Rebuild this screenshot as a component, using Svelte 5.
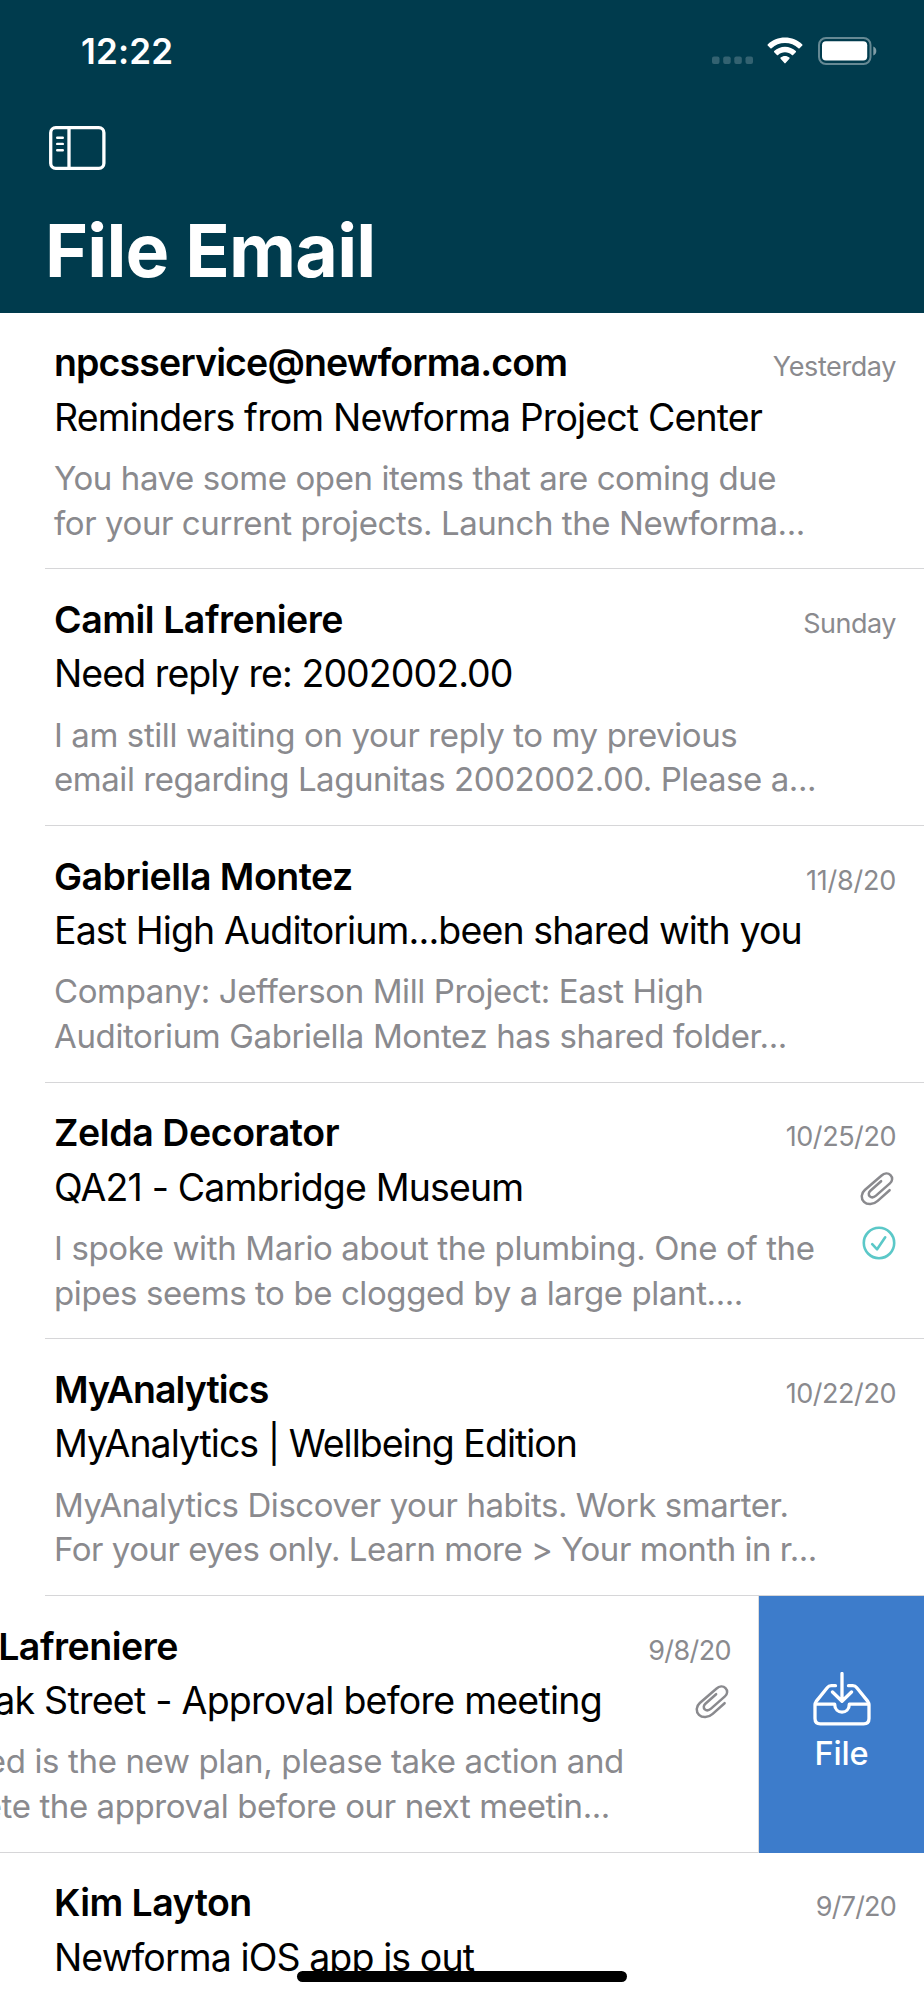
<script lang="ts">
    interface Line {
        text: string;
        tracking: number;
    }

    interface Message {
        id: number;
        sender: Line;
        date: Line;
        subject: Line;
        preview: Line[];
        attachment?: boolean;
        filed?: boolean;
        swiped?: boolean;
    }

    function line(text: string, tracking: number): Line {
        return { text, tracking };
    }

    const messages: Message[] = [
        {
            id: 1,
            sender: line("npcsservice@newforma.com", -0.86),
            date: line("Yesterday", -0.4),
            subject: line("Reminders from Newforma Project Center", -0.87),
            preview: [
                line("You have some open items that are coming due", -0.4),
                line("for your current projects. Launch the Newforma...", -0.42),
            ],
        },
        {
            id: 2,
            sender: line("Camil Lafreniere", -0.48),
            date: line("Sunday", -0.5),
            subject: line("Need reply re: 2002002.00", -0.93),
            preview: [
                line("I am still waiting on your reply to my previous", -0.4),
                line("email regarding Lagunitas 2002002.00. Please a...", -0.44),
            ],
        },
        {
            id: 3,
            sender: line("Gabriella Montez", -0.5),
            date: line("11/8/20", -0.25),
            subject: line("East High Auditorium...been shared with you", -0.88),
            preview: [
                line("Company: Jefferson Mill Project: East High", -0.39),
                line("Auditorium Gabriella Montez has shared folder...", -0.37),
            ],
        },
        {
            id: 4,
            sender: line("Zelda Decorator", -0.42),
            date: line("10/25/20", -0.45),
            subject: line("QA21 - Cambridge Museum", -0.85),
            preview: [
                line("I spoke with Mario about the plumbing. One of the", -0.37),
                line("pipes seems to be clogged by a large plant....", -0.4),
            ],
            attachment: true,
            filed: true,
        },
        {
            id: 5,
            sender: line("MyAnalytics", -0.92),
            date: line("10/22/20", -0.45),
            subject: line("MyAnalytics | Wellbeing Edition", -1),
            preview: [
                line("MyAnalytics Discover your habits. Work smarter.", -0.43),
                line("For your eyes only. Learn more > Your month in r...", -0.48),
            ],
        },
        {
            id: 6,
            sender: line("Camil Lafreniere", -0.48),
            date: line("9/8/20", -0.6),
            subject: line("248 Oak Street - Approval before meeting", -0.75),
            preview: [
                line("Attached is the new plan, please take action and", -0.36),
                line("complete the approval before our next meetin...", -0.4),
            ],
            attachment: true,
            swiped: true,
        },
        {
            id: 7,
            sender: line("Kim Layton", -0.55),
            date: line("9/7/20", -0.8),
            subject: line("Newforma iOS app is out", -0.9),
            preview: [],
        },
    ];
</script>

{#snippet paperclip()}
    <svg class="clip" viewBox="0 0 34 34" fill="none">
        <path
            d="M29.6 18.2 17.700 28.900C13.200 33 7.200 33 4 29.800 .8 26.600 .9 21.500 4.800 18L21.300 3.700c3-2.600 6.900-2.800 9.200-.5s2.200 5.700-.6 8.200L16 23.600c-2 1.800-4.600 2.200-6.200.7s-1.300-3.800.6-5.500l10.700-9.600"
        />
    </svg>
{/snippet}

<div class="screen">
    <header>
        <div class="status-bar">
            <span class="clock">12:22</span>
            <div class="indicators">
                <svg class="signal" width="41" height="28" viewBox="0 0 41 28">
                    <rect x="0" y="19.5" width="7.5" height="7.5" rx="2" />
                    <rect x="11.2" y="19.5" width="7.5" height="7.5" rx="2" />
                    <rect x="22.3" y="19.5" width="7.5" height="7.5" rx="2" />
                    <rect x="33.5" y="19.5" width="7.5" height="7.5" rx="2" />
                </svg>
                <svg class="wifi" width="36" height="28" viewBox="0 0 36 28">
                    <path
                        d="M18 .5c6.6 0 12.7 2.6 17.3 6.9q.6.6 0 1.2l-2.700 2.700q-.6.5-1.2 0C27.800 7.900 23.100 6 18 6S8.200 7.900 4.600 11.300q-.6.5-1.200 0L.7 8.600q-.6-.6 0-1.200C5.300 3.100 11.400.5 18 .5z"
                    />
                    <path
                        d="M18 9.800c4.100 0 7.900 1.600 10.800 4.200q.6.600 0 1.200l-2.700 2.700q-.6.500-1.200 0c-1.900-1.700-4.300-2.700-6.900-2.700s-5 1-6.900 2.700q-.6.500-1.200 0l-2.700-2.700q-.6-.6 0-1.200c2.900-2.600 6.700-4.200 10.800-4.200z"
                    />
                    <path
                        d="M18 19c1.700 0 3.200.6 4.400 1.600q.6.600 0 1.200l-3.800 4.300q-.6.600-1.200 0l-3.800-4.300q-.6-.6 0-1.200C14.800 19.600 16.300 19 18 19z"
                    />
                </svg>
                <svg class="battery" width="60" height="28" viewBox="0 0 60 28">
                    <rect
                        class="shell"
                        x="1"
                        y="1"
                        width="51.5"
                        height="26"
                        rx="7"
                    />
                    <rect x="4" y="4.3" width="45.2" height="19.2" rx="4" />
                    <path class="tip" d="M55.3 9.5c4 1.5 4 7.500 0 9z" />
                </svg>
            </div>
        </div>

        <button type="button" class="sidebar-toggle" aria-label="Sidebar">
            <svg width="57" height="44" viewBox="0 0 57 44" fill="none">
                <rect x="1.7" y="1.7" width="53.2" height="40.6" rx="5" />
                <path d="M20 1.7v40.6" />
                <path
                    class="rows"
                    d="M8.2 11.8h5.6M8.2 17.9h5.6M8.2 24.2h5.6"
                />
            </svg>
        </button>

        <h1>File Email</h1>
    </header>

    <main>
        {#each messages as message (message.id)}
            <div class="row" class:swiped={message.swiped}>
                <article class="message">
                    <div class="top">
                        <span
                            class="sender"
                            style:letter-spacing="{message.sender.tracking}px"
                            >{message.sender.text}</span
                        >
                        <time
                            style:letter-spacing="{message.date.tracking}px"
                            >{message.date.text}</time
                        >
                    </div>
                    <div class="middle">
                        <span
                            class="subject"
                            style:letter-spacing="{message.subject.tracking}px"
                            >{message.subject.text}</span
                        >
                        {#if message.attachment}
                            {@render paperclip()}
                        {/if}
                    </div>
                    <div class="bottom">
                        <div class="preview">
                            {#each message.preview as part}
                                <p style:letter-spacing="{part.tracking}px">
                                    {part.text}
                                </p>
                            {/each}
                        </div>
                        {#if message.filed}
                            <svg class="check" viewBox="0 0 34 34" fill="none">
                                <circle cx="17" cy="17" r="15.2" />
                                <path d="M10.2 18.2 15.1 23.3 23.2 11.3" />
                            </svg>
                        {/if}
                    </div>
                </article>

                {#if message.swiped}
                    <button type="button" class="file-action">
                        <svg
                            width="58"
                            height="54"
                            viewBox="0 0 58 54"
                            fill="none"
                        >
                            <path
                                d="M22.5 13.7h-4.300q-2.400 0-4 2.100L3.200 29.400Q2 31 2 33v13.500q0 5.300 5.300 5.300h43.400q5.300 0 5.300-5.300V33q0-2-1.200-3.600L43.800 15.800q-1.600-2.100-4-2.100h-4.300"
                            />
                            <path
                                d="M2.5 32.2h19.200c0 10.600 14.600 10.600 14.600 0h19.200"
                            />
                            <path d="M29 1.5v27.5M19.5 20l9.5 9.3L38.5 20" />
                        </svg>
                        <span>File</span>
                    </button>
                {/if}
            </div>
        {/each}
    </main>

    <div class="home-indicator"></div>
</div>

<style>
    :global(body) {
        margin: 0;
        background: #fff;
    }

    .screen {
        position: relative;
        width: 924px;
        height: 2000px;
        overflow: hidden;
        background: #fff;
        font-family: Inter, "Liberation Sans", sans-serif;
    }

    header {
        box-sizing: border-box;
        height: 312.8px;
        background: #003b4d;
        color: #fff;
    }

    .status-bar {
        display: flex;
        align-items: center;
        justify-content: space-between;
        height: 101px;
        padding: 0 46.5px 0 81px;
    }

    .clock {
        font-size: 35px;
        font-weight: 600;
        line-height: 42px;
        letter-spacing: 0.2px;
    }

    .indicators {
        display: flex;
        align-items: center;
    }

    .indicators svg {
        fill: #fff;
    }

    .signal {
        opacity: 0.2;
        margin-right: 14px;
    }

    .wifi {
        margin-right: 15px;
    }

    .battery .shell {
        fill: none;
        stroke: #fff;
        stroke-width: 2;
        opacity: 0.4;
    }

    .battery .tip {
        opacity: 0.5;
    }

    button {
        border: 0;
        padding: 0;
        color: inherit;
        font-family: inherit;
        cursor: pointer;
    }

    .sidebar-toggle {
        display: block;
        margin: 24.5px 0 0 49px;
        height: 44px;
        background: none;
    }

    .sidebar-toggle svg {
        display: block;
        stroke: #fff;
        stroke-width: 3.3;
    }

    .sidebar-toggle .rows {
        stroke-width: 2.4;
        stroke-linecap: round;
    }

    h1 {
        margin: 36.5px 0 0 45px;
        font-size: 73.5px;
        font-weight: 700;
        line-height: 90px;
        letter-spacing: -0.8px;
    }

    .row {
        display: flex;
        height: 256.67px;
        overflow: hidden;
    }

    .message {
        position: relative;
        box-sizing: border-box;
        flex: 0 0 924px;
        height: 256.67px;
        padding: 23.5px 28px 0 54px;
        background: #fff;
    }

    .message::after {
        content: "";
        position: absolute;
        left: 45px;
        right: 0;
        bottom: 0;
        height: 1px;
        background: #d6d6d8;
    }

    .swiped .message {
        margin-left: -165px;
        border-right: 1px solid #dcdcdd;
        padding-right: 27px;
    }

    .top,
    .middle,
    .bottom {
        display: flex;
        justify-content: space-between;
        white-space: nowrap;
    }

    .top {
        align-items: baseline;
        height: 54.3px;
    }

    .sender {
        font-size: 37.5px;
        font-weight: 600;
        line-height: 54px;
        color: #000;
    }

    time {
        font-size: 27px;
        line-height: 54px;
        color: #8a8a8e;
    }

    .middle {
        align-items: center;
        height: 54px;
    }

    .subject {
        font-size: 37.5px;
        line-height: 54px;
        color: #000;
    }

    .clip {
        width: 34px;
        height: 34px;
        margin: 2px 2px 0 0;
        stroke: #8a8a8e;
        stroke-width: 2.5;
        stroke-linecap: round;
        stroke-linejoin: round;
    }

    .bottom {
        margin-top: 11.5px;
    }

    .preview p {
        margin: 0;
        font-size: 33px;
        line-height: 44.6px;
        color: #8a8a8e;
    }

    .check {
        width: 34px;
        height: 34px;
        margin: -0.5px 0.5px 0 0;
        stroke: #5bc8c8;
        stroke-width: 2.6;
        stroke-linecap: round;
        stroke-linejoin: round;
    }

    .file-action {
        display: flex;
        flex: 0 0 165px;
        flex-direction: column;
        align-items: center;
        justify-content: flex-start;
        box-sizing: border-box;
        padding: 76px 0 0;
        background: #3d7ccb;
        color: #fff;
    }

    .file-action svg {
        stroke: #fff;
        stroke-width: 3.3;
        stroke-linecap: round;
        stroke-linejoin: round;
    }

    .file-action span {
        margin-top: 6.5px;
        font-size: 32.5px;
        font-weight: 500;
        line-height: 42px;
        letter-spacing: -0.2px;
    }

    .home-indicator {
        position: absolute;
        left: 297px;
        bottom: 18px;
        width: 330px;
        height: 11px;
        border-radius: 5.5px;
        background: #000;
    }
</style>
